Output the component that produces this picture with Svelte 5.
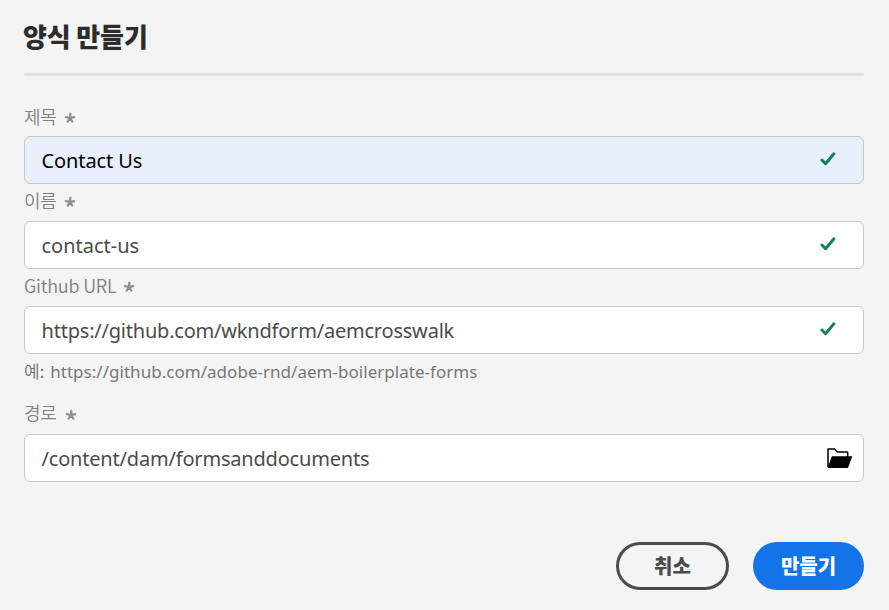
<script>
  let fields = $state([
    { id: 'title', label: '제목', value: 'Contact Us', valid: true, filled: true },
    { id: 'name', label: '이름', value: 'contact-us', valid: true },
    { id: 'github', label: 'Github URL', value: 'https://github.com/wkndform/aemcrosswalk', valid: true, help: true },
    { id: 'path', label: '경로', value: '/content/dam/formsanddocuments', browse: true }
  ]);
</script>

<main>
  <h1>양식 만들기</h1>
  <hr />
  <form>
    {#each fields as field (field.id)}
      <div class="field {field.id}">
        <div class="label">
          <span class="caption">{field.label}</span>
          <svg class="star" width="12" height="12" viewBox="0 0 12 12">
            <path d="M6 6.1 6.4 .9M6 6.1 10.9 4.9M6 6.1 8.8 10.3M6 6.1 3.2 10.4M6 6.1 1 4.7" />
          </svg>
        </div>
        <div class="box" class:filled={field.filled}>
          <span class="value">{field.value}</span>
          {#if field.valid}
            <svg class="check" width="16" height="14" viewBox="0 0 16 14">
              <path d="M1.9 8 5.6 11.8 13.9 1.8" />
            </svg>
          {/if}
          {#if field.browse}
            <svg class="folder" width="26" height="21" viewBox="0 0 26 21">
              <path d="M1 19V1.4Q1 1 1.4 1H7.6L10.4 4H20Q20.7 4 20.7 4.7V9" fill="none" stroke="#000" stroke-width="1.5" />
              <path d="M4.8 8.2H25.3L21.3 19.2Q21 20 20.2 20H1Q.6 20 .8 19.3Z" />
            </svg>
          {/if}
        </div>
        {#if field.help}
          <p class="help"><span class="prefix">예:</span><span class="url">https://github.com/adobe-rnd/aem-boilerplate-forms</span></p>
        {/if}
      </div>
    {/each}
  </form>
  <footer>
    <button class="cancel">취소</button>
    <button class="create">만들기</button>
  </footer>
</main>

<style>
  :global(body) {
    margin: 0;
    background: #f4f4f4;
  }
  main {
    box-sizing: border-box;
    width: 889px;
    height: 610px;
    padding: 17px 25px 20px 24px;
    background: #f4f4f4;
    font-family: 'Noto Sans CJK KR', sans-serif;
    overflow: hidden;
    display: flex;
    flex-direction: column;
  }
  h1 {
    margin: 0 0 0 -1px;
    height: 56px;
    font-size: 26px;
    line-height: 38px;
    font-weight: 900;
    letter-spacing: -0.15px;
    color: #2c2c2c;
    white-space: nowrap;
  }
  hr {
    flex: none;
    width: 840px;
    height: 3px;
    margin: 0 0 23px;
    border: 0;
    border-radius: 2px;
    background: #e1e1e1;
  }
  .label {
    height: 37px;
    display: flex;
    gap: 7px;
    color: #808080;
  }
  .caption {
    font-size: 18px;
    line-height: 34px;
    font-weight: 350;
    letter-spacing: -0.2px;
  }
  .name .caption {
    line-height: 33px;
  }
  .github .caption {
    line-height: 33px;
  }
  .path .caption {
    line-height: 31px;
  }
  .path .label {
    gap: 8px;
  }
  .star {
    margin-top: 13px;
    fill: none;
    stroke: #8e8e8e;
    stroke-width: 2.2;
  }
  .name .star,
  .github .star,
  .path .star {
    margin-top: 12px;
  }
  .box {
    box-sizing: border-box;
    height: 48px;
    border: 1px solid #c8c8c8;
    border-radius: 6px;
    background: #fff;
    color: #4b4b4b;
    display: flex;
    align-items: center;
    padding: 0 10px 0 16px;
  }
  .filled {
    background: #e8effd;
    color: #000;
  }
  .value {
    flex: 1;
    font: 20px/46px 'Noto Sans', sans-serif;
    padding: 2px 0 0 0.5px;
    height: 46px;
    white-space: nowrap;
  }
  .title .value {
    letter-spacing: -0.1px;
  }
  .github .value {
    letter-spacing: -0.21px;
  }
  .path .value {
    letter-spacing: -0.19px;
  }
  .check {
    margin: 0 17px 2px 0;
    fill: none;
    stroke: #12805c;
    stroke-width: 2.9;
    stroke-linecap: round;
    stroke-linejoin: round;
  }
  .help {
    display: flex;
    gap: 6px;
    margin: 0;
    height: 43px;
    font-size: 17px;
    line-height: 34px;
    font-weight: 350;
    color: #6e6e6e;
  }
  .url {
    font: 17px/35px 'Noto Sans', sans-serif;
    letter-spacing: 0.03px;
    color: #777;
  }
  footer {
    margin-top: auto;
    display: flex;
    justify-content: flex-end;
    gap: 24px;
  }
  button {
    box-sizing: border-box;
    height: 48px;
    padding: 0;
    border-radius: 24px;
    font: 900 20px/40px 'Noto Sans CJK KR', sans-serif;
  }
  .cancel {
    width: 113px;
    border: 3px solid #4b4b4b;
    background: transparent;
    color: #4b4b4b;
  }
  .create {
    width: 111px;
    border: 0;
    background: #1473e6;
    color: #fff;
  }
</style>
